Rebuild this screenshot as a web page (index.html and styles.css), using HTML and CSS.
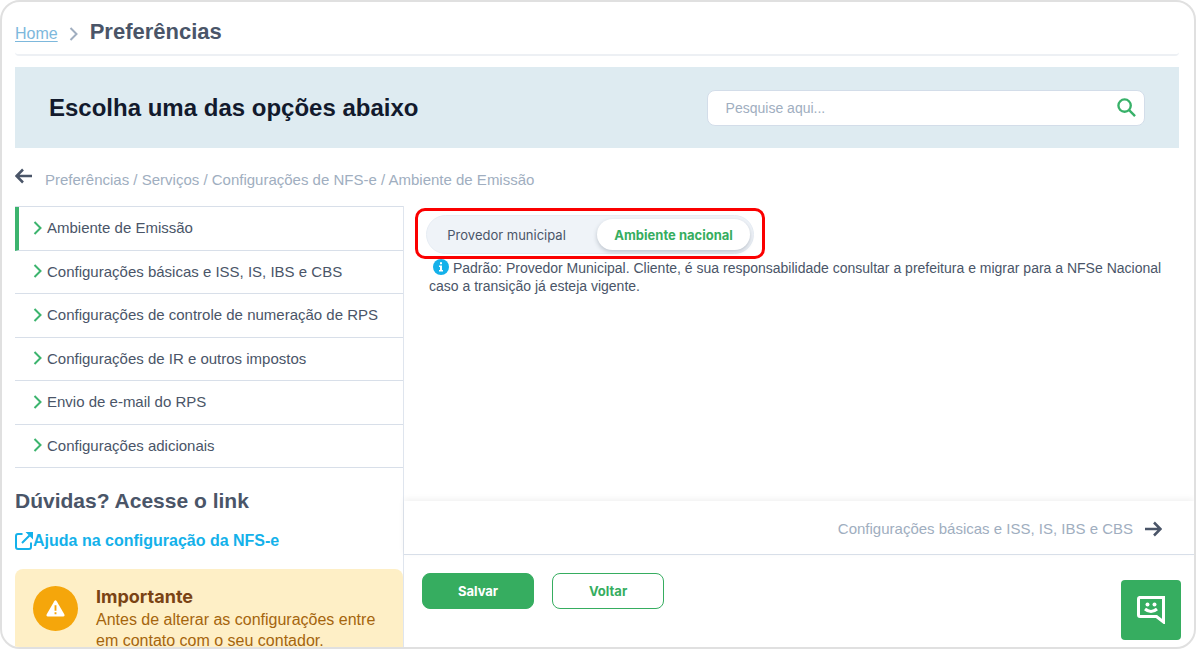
FILE: index.html
```
<!DOCTYPE html>
<html lang="pt-BR">
<head>
  <meta charset="UTF-8">
  <meta name="viewport" content="width=device-width, initial-scale=1">
  <title>Preferências</title>
  <link rel="stylesheet" href="styles.css">
</head>
<body>
<div class="window">
  <header class="page-header">
    <a href="#" class="home-link">Home</a>
    <svg class="header-chevron" viewBox="0 0 10 14"><path d="M1.500 1l6 6l-6 6"/></svg>
    <h1>Preferências</h1>
  </header>

  <section class="banner">
    <h2>Escolha uma das opções abaixo</h2>
    <form class="search">
      <input type="search" placeholder="Pesquise aqui..." aria-label="Pesquise aqui">
      <button type="button" aria-label="Pesquisar">
        <svg viewBox="0 0 20 20"><circle cx="8" cy="8" r="6.500"/><path d="M12.800 12.800L19 19"/></svg>
      </button>
    </form>
  </section>

  <nav class="crumbs" aria-label="Caminho">
    <button type="button" aria-label="Voltar ao nível anterior">
      <svg class="arrow" viewBox="0 0 18 16"><path d="M17 8H2M8 1.500L1.500 8L8 14.500"/></svg>
    </button>
    <span>Preferências / Serviços / Configurações de NFS-e / Ambiente de Emissão</span>
  </nav>

  <div class="columns">
    <aside class="side">
      <ul class="side-menu">
        <li class="active"><a href="#"><svg viewBox="0 0 10 14"><path d="M1.500 1l6 6l-6 6"/></svg>Ambiente de Emissão</a></li>
        <li><a href="#"><svg viewBox="0 0 10 14"><path d="M1.500 1l6 6l-6 6"/></svg>Configurações básicas e ISS, IS, IBS e CBS</a></li>
        <li><a href="#"><svg viewBox="0 0 10 14"><path d="M1.500 1l6 6l-6 6"/></svg>Configurações de controle de numeração de RPS</a></li>
        <li><a href="#"><svg viewBox="0 0 10 14"><path d="M1.500 1l6 6l-6 6"/></svg>Configurações de IR e outros impostos</a></li>
        <li><a href="#"><svg viewBox="0 0 10 14"><path d="M1.500 1l6 6l-6 6"/></svg>Envio de e-mail do RPS</a></li>
        <li><a href="#"><svg viewBox="0 0 10 14"><path d="M1.500 1l6 6l-6 6"/></svg>Configurações adicionais</a></li>
      </ul>
      <h3>Dúvidas? Acesse o link</h3>
      <a href="#" class="help-link">
        <svg viewBox="0 0 18 18">
          <path d="M7.500 2H3Q1 2 1 4V15Q1 17 3 17H14Q16 17 16 15V10.500M7 11L14.500 3.500"/>
          <path class="fill" d="M10.500 0H18V7.500Z"/>
        </svg>Ajuda na configuração da NFS-e</a>
      <div class="alert">
        <span class="alert-icon">
          <svg viewBox="0 0 20 18"><path d="M8.700 1.200Q10-.5 11.300 1.200L19.300 15.200Q20 17.300 18 17.500H2Q0 17.300.7 15.200Z"/><path class="mark" d="M10 5.500V11.500M10 13V15.200"/></svg>
        </span>
        <div>
          <h4>Importante</h4>
          <p>Antes de alterar as configurações entre em contato com o seu contador.</p>
        </div>
      </div>
    </aside>

    <main class="content">
      <div class="panel">
        <div class="highlight">
          <div class="toggle">
            <button type="button" aria-pressed="false">Provedor municipal</button>
            <button type="button" aria-pressed="true" class="selected">Ambiente nacional</button>
          </div>
        </div>
        <p class="info">
          <svg viewBox="0 0 16 16"><circle cx="8" cy="8" r="8"/><path d="M7 3.200h2v2H7zM6 6.500h3v4.500h1v1.500H6V11h1V8H6z"/></svg>
          Padrão: Provedor Municipal. Cliente, é sua responsabilidade consultar a prefeitura e migrar para a NFSe Nacional caso a transição já esteja vigente.
        </p>
      </div>
      <a href="#" class="next-step">
        Configurações básicas e ISS, IS, IBS e CBS
        <svg class="arrow" viewBox="0 0 18 16"><path d="M1 8H16M10 1.500L16.500 8L10 14.500"/></svg>
      </a>
      <div class="actions">
        <button type="button" class="btn btn-primary">Salvar</button>
        <button type="button" class="btn">Voltar</button>
      </div>
    </main>
  </div>

  <button type="button" class="chat" aria-label="Chat">
    <svg viewBox="0 0 28 28">
      <path d="M2 1.500H26.500V26L19.500 20.500H3Q1.500 20.500 1.500 19V3Q1.500 1.500 3 1.500"/>
      <path d="M8 13Q14 18 20 13"/>
      <circle cx="10.500" cy="8.500" r="2"/><circle cx="17.500" cy="8.500" r="2"/>
    </svg>
  </button>
</div>
</body>
</html>
```
FILE: styles.css
```
* {
  box-sizing: border-box;
}
body {
  margin: 0;
  font-family: "Liberation Sans", Arial, sans-serif;
  font-size: 15px;
  color: #4a5568;
  background-color: #fff;
}
h1, h2, h3, h4, p, ul {
  margin: 0;
  padding: 0;
}
button {
  padding: 0;
  border: 0;
  background: none;
  font-family: Inter, sans-serif;
  cursor: pointer;
}
svg {
  flex: none;
  fill: none;
  stroke: currentColor;
  stroke-width: 2;
}

.window {
  position: relative;
  display: flex;
  flex-direction: column;
  height: 100vh;
  border: 2px solid #e0e0e0;
  border-radius: 20px;
  overflow: hidden;
}

/* Header */
.page-header {
  display: flex;
  align-items: center;
  gap: 11px;
  height: 54px;
  margin: 0 15px 11px 13px;
  padding-top: 8px;
  border-bottom: 2px solid #edf0f4;
  border-radius: 4px;
}
.home-link {
  margin-top: 4px;
  font-size: 16px;
  color: #7db8dc;
  text-underline-offset: 2px;
}
.header-chevron {
  width: 10px;
  height: 14px;
  margin-top: 3px;
  color: #a0aec0;
}
.page-header h1 {
  font-size: 22px;
}

.banner {
  display: flex;
  align-items: center;
  justify-content: space-between;
  height: 81px;
  margin: 0 15px 0 13px;
  padding: 0 34px;
  background-color: #deebf1;
}
.banner h2 {
  font-size: 24px;
  color: #121a2d;
}
.search {
  display: flex;
  align-items: center;
  width: 40%;
  height: 36px;
  padding: 0 8px 0 18px;
  border: 1px solid #d3dde9;
  border-radius: 8px;
  background-color: #fff;
}
.search input {
  flex: 1;
  min-width: 0;
  padding: 0;
  border: 0;
  outline: 0;
  font-family: inherit;
  font-size: 14px;
}
.search input::placeholder {
  color: #a0aec0;
}
.search svg {
  display: block;
  width: 19px;
  height: 19px;
  stroke-width: 2.5;
  color: #38b169;
}

.crumbs {
  display: flex;
  align-items: center;
  gap: 12px;
  height: 58px;
  padding: 4px 13px 0;
  color: #a0aec0;
}
.crumbs button {
  margin-bottom: 6px;
  color: inherit;
}
.arrow {
  display: block;
  width: 18px;
  height: 16px;
  stroke-width: 2.5;
  color: #4a5568;
}

/* Columns */
.columns {
  display: flex;
  flex: 1;
  min-height: 0;
  margin-left: 13px;
}
.side {
  flex: 0 0 33%;
  border-right: 1px solid #dfe5ee;
}
.side-menu {
  display: grid;
  grid-auto-rows: 1fr;
  min-height: 262px;
  border-top: 1px solid #d8dfe9;
  list-style: none;
}
.side-menu li {
  border-bottom: 1px solid #d8dfe9;
}
.side-menu a {
  display: flex;
  align-items: center;
  gap: 4px;
  height: 100%;
  padding: 0 0 1px 18px;
  color: inherit;
  text-decoration: none;
}
.side-menu svg {
  width: 10px;
  height: 14px;
  color: #3cb46e;
}
.side-menu .active {
  border-left: 4px solid #3cb46e;
}
.side-menu .active a {
  padding-left: 14px;
}
.side h3 {
  padding: 21px 0 18px;
  font-size: 21px;
  line-height: 24px;
}
.help-link {
  display: flex;
  align-items: center;
  height: 20px;
  margin-bottom: 18px;
  font-size: 16px;
  font-weight: bold;
  color: #14b1ea;
  text-decoration: none;
}
.help-link svg {
  width: 18px;
  height: 18px;
}
.help-link .fill {
  fill: currentColor;
  stroke: none;
}
.alert {
  display: flex;
  gap: 18px;
  padding: 17px 18px;
  border-radius: 8px;
  background-color: #feefc6;
  color: #a5650d;
  font-size: 16px;
  line-height: 21px;
}
.alert-icon {
  display: flex;
  flex: none;
  align-items: center;
  justify-content: center;
  width: 45px;
  height: 45px;
  border-radius: 50%;
  background-color: #f5a60b;
}
.alert-icon svg {
  width: 19px;
  height: 17px;
  fill: #fff;
  stroke: none;
}
.alert-icon .mark {
  stroke: #f5a60b;
}
.alert h4 {
  padding-bottom: 2px;
  font-family: Inter, sans-serif;
  font-size: 18px;
  color: #7a4314;
}

.content {
  display: flex;
  flex: 1;
  flex-direction: column;
  min-width: 0;
}
.panel {
  flex: 1;
  padding: 2px 11px;
}
.highlight {
  width: fit-content;
  padding: 4px 8px 2px;
  border: 3px solid #fb0000;
  border-radius: 10px;
}
.toggle {
  display: flex;
  gap: 14px;
  padding: 3px;
  border: 1px solid #e6ecf3;
  border-radius: 20px;
  background-color: #eff3f8;
}
.toggle button {
  width: 153px;
  height: 31px;
  border-radius: 16px;
  font-size: 13px;
  color: #4a5568;
}
.toggle .selected {
  background-color: #fff;
  box-shadow: 0 2px 4px rgba(74, 85, 104, .3);
  font-weight: bold;
  color: #36ad60;
}
.info {
  padding: 0 8px 0 14px;
  font-size: 14px;
  line-height: 18px;
}
.info svg {
  width: 16px;
  height: 16px;
  margin-left: 4px;
  vertical-align: -2px;
  fill: #14b1ea;
  stroke: none;
}
.info path {
  fill: #fff;
}
.next-step {
  display: flex;
  align-items: center;
  justify-content: flex-end;
  gap: 11px;
  height: 54px;
  padding: 2px 32px 0 0;
  border-bottom: 1px solid #d8dfe9;
  background-color: #fff;
  box-shadow: 0 -2px 6px rgba(0, 0, 0, .06);
  color: #a0aec0;
  text-decoration: none;
}
.actions {
  display: flex;
  gap: 18px;
  padding: 18px 18px 38px;
}
.btn {
  width: 112px;
  height: 36px;
  border: 1px solid #36ad60;
  border-radius: 8px;
  font-size: 13px;
  font-weight: bold;
  color: #36ad60;
}
.btn-primary {
  background-color: #36ad60;
  color: #fff;
}

/* Floats over the content */
.chat {
  position: absolute;
  right: 13px;
  bottom: 7px;
  display: flex;
  align-items: center;
  justify-content: center;
  width: 60px;
  height: 60px;
  border-radius: 4px;
  background-color: #36ad60;
  color: #fff;
}
.chat svg {
  width: 28px;
  height: 28px;
  stroke-width: 3;
}
.chat circle {
  fill: currentColor;
  stroke: none;
}
```
